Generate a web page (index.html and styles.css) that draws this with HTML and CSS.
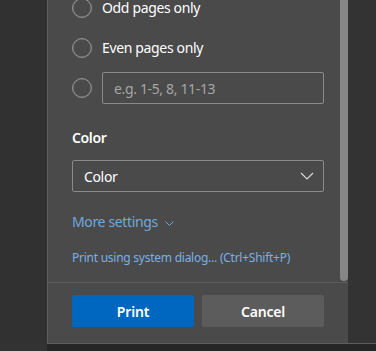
FILE: index.html
```html
<!DOCTYPE html>
<html lang="en">
<head>
  <meta charset="UTF-8" />
  <meta name="viewport" content="width=device-width, initial-scale=1" />
  <title>Print</title>
  <link rel="stylesheet" href="styles.css">
</head>
<body>
  <div class="screen">
    <div class="gutter"></div>
    <div class="panel">
      <div class="scroll-area">
        <div class="settings">
          <label class="radio-row top-row">
            <span class="radio"></span>
            <span>Odd pages only</span>
          </label>
          <label class="radio-row">
            <span class="radio"></span>
            <span>Even pages only</span>
          </label>
          <div class="radio-row">
            <span class="radio"></span>
            <input type="text" class="pages-input" placeholder="e.g. 1-5, 8, 11-13" />
          </div>

          <h3 class="section-title">Color</h3>
          <div class="select">
            <span>Color</span>
            <svg class="chevron" width="14" height="8" viewBox="0 0 14 8">
              <polyline points="1,1 7,7 13,1" fill="none" stroke="#d8d8d8" stroke-width="1.2" />
            </svg>
          </div>

          <a class="more-link" href="#">More settings
            <svg class="small-chevron" width="9" height="5" viewBox="0 0 9 5">
              <polyline points="0.5,0.5 4.5,4.5 8.5,0.5" fill="none" stroke="#6fa9dd" stroke-width="1" />
            </svg>
          </a>
          <a class="system-link" href="#">Print using system dialog... (Ctrl+Shift+P)</a>
        </div>
        <div class="scrollbar"><div class="thumb"></div></div>
      </div>
      <div class="footer">
        <button class="btn primary">Print</button>
        <button class="btn secondary">Cancel</button>
      </div>
    </div>
    <div class="backdrop"></div>
  </div>
  <div class="bottom-strip"></div>
</body>
</html>
```

FILE: styles.css
```css
body {
  margin: 0;
  background: #333333;
  font-family: "Segoe UI", "Noto Sans", sans-serif;
  font-size: 14px;
  letter-spacing: -0.35px;
  color: #ffffff;
  overflow: hidden;
}
.screen {
  display: flex;
  height: 343px;
}
.gutter {
  width: 47px;
  background: #313131;
}
.panel {
  width: 300px;
  border-left: 1px solid #5e5e5e;
  background: #4a4a4a;
  display: flex;
  flex-direction: column;
}
.backdrop {
  flex: 1;
  background: #333333;
}
.scroll-area {
  height: 282px;
  display: flex;
  overflow: hidden;
}
.settings {
  width: 292px;
  box-sizing: border-box;
  padding: 0 16px 0 24px;
}
.radio-row {
  display: flex;
  align-items: center;
  height: 32px;
  margin-bottom: 8px;
  line-height: 16px;
}
/* first row is half scrolled out of view */
.radio-row.top-row {
  height: 16px;
  margin-bottom: 16px;
}
.radio {
  width: 20px;
  height: 20px;
  box-sizing: border-box;
  border: 1px solid #939393;
  box-shadow: inset 0 0 0 0.5px #7a7a7a;
  border-radius: 50%;
  margin-right: 10px;
  flex-shrink: 0;
}
.pages-input {
  width: 222px;
  height: 32px;
  box-sizing: border-box;
  border: 1px solid #8a8a8a;
  border-radius: 2px;
  background: transparent;
  color: #fff;
  font-family: inherit;
  font-size: 14px;
  letter-spacing: -0.35px;
  padding: 0 11px;
  outline: none;
}
.pages-input::placeholder {
  color: #a6a6a6;
}
.section-title {
  margin: 24px 0 12px;
  font-size: 14px;
  font-weight: 600;
  line-height: 20px;
}
.select {
  height: 32px;
  box-sizing: border-box;
  border: 1px solid #8a8a8a;
  border-radius: 2px;
  display: flex;
  align-items: center;
  justify-content: space-between;
  padding: 0 9px 0 11px;
}
.chevron {
  display: block;
}
.more-link {
  display: flex;
  align-items: center;
  margin-top: 20px;
  line-height: 20px;
  color: #6fa9dd;
  text-decoration: none;
}
.small-chevron {
  margin-left: 7px;
  margin-top: 3px;
}
.system-link {
  display: block;
  margin-top: 18px;
  font-size: 12px;
  letter-spacing: -0.25px;
  line-height: 16px;
  color: #7ab0e6;
  text-decoration: none;
}
.scrollbar {
  width: 8px;
}
.thumb {
  height: 281px;
  background: #868686;
  border-radius: 0 0 4px 4px;
}
.footer {
  height: 60px;
  box-sizing: border-box;
  border-top: 1px solid #5c5c5c;
  padding: 12px 16px 0 24px;
  display: flex;
  gap: 8px;
}
.btn {
  width: 122px;
  height: 32px;
  border: none;
  border-radius: 2px;
  color: #fff;
  font-family: inherit;
  font-size: 14px;
  font-weight: 600;
  letter-spacing: -0.2px;
}
.primary {
  background: #0067c0;
}
.secondary {
  background: #5c5c5c;
}
.bottom-strip {
  margin-left: 47px;
  height: 8px;
  border-top: 1px solid #5e5e5e;
  background: #262626;
}
```
